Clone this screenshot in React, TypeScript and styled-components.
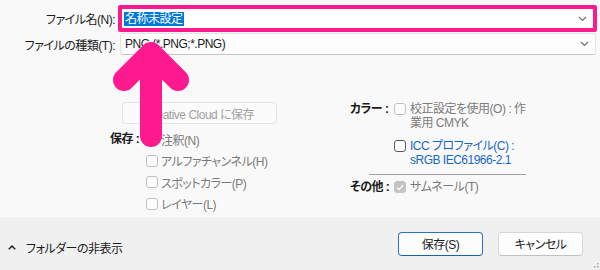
import styled, { createGlobalStyle } from "styled-components";

const GlobalStyle = createGlobalStyle`
  html, body {
    margin: 0;
    padding: 0;
  }
  body {
    background: #f9f9f9;
    font-family: "Liberation Sans", "Noto Sans CJK JP", sans-serif;
  }
`;

const Dialog = styled.div`
  position: relative;
  width: 600px;
  height: 270px;
  overflow: hidden;
  display: flex;
  flex-direction: column;
  font-size: 12px;
  letter-spacing: -0.5px;
  color: #1b1b1b;
  font-feature-settings: "palt";
`;

const Body = styled.div`
  height: 217px;
  box-sizing: border-box;
  padding-top: 5px;
  background: #f9f9f9;
`;

const FieldGrid = styled.div`
  display: grid;
  grid-template-columns: 118px 1fr;
  row-gap: 1px;
  align-items: center;
`;

const FieldLabel = styled.label`
  text-align: right;
  padding-right: 3px;
  white-space: nowrap;
`;

const NameBox = styled.div`
  height: 27px;
  box-sizing: border-box;
  margin-right: 3px;
  padding: 0 6px 0 2px;
  display: flex;
  align-items: center;
  justify-content: space-between;
  background: #fff;
  border: 4px solid #fd1a8e;
  border-radius: 2px;
`;

const Selected = styled.span`
  background: #0078d7;
  color: #fff;
  line-height: 14px;
  padding: 0 1px;
`;

const TypeBox = styled.div`
  height: 22px;
  box-sizing: border-box;
  margin: 0 4px 0 2px;
  padding: 0 6px 0 4px;
  display: flex;
  align-items: center;
  justify-content: space-between;
  background: #fdfdfd;
  border: 1px solid #e4e4e4;
  border-bottom-color: #c6c6c6;
  border-radius: 3px;
`;

const Options = styled.div`
  display: flex;
  padding-top: 47px;
`;

const LeftPanel = styled.div`
  margin-left: 110px;
  width: 240px;
  display: flex;
  flex-direction: column;
`;

const CloudButton = styled.div`
  margin-left: 12px;
  width: 155px;
  height: 22px;
  box-sizing: border-box;
  display: flex;
  align-items: center;
  justify-content: center;
  background: #fbfbfb;
  border: 1px solid #e5e5e5;
  border-radius: 4px;
  color: #a0a0a0;
`;

const SaveGroup = styled.div`
  margin-top: 4.5px;
  display: grid;
  grid-template-columns: 36px 1fr;
  grid-auto-rows: 21.5px;
  align-items: center;
`;

const GroupLabel = styled.span<{ $right?: boolean }>`
  font-weight: 700;
  white-space: nowrap;
  line-height: 14px;
  text-align: ${(p) => (p.$right ? "right" : "left")};
  padding-right: ${(p) => (p.$right ? "6px" : "0")};
  align-self: ${(p) => (p.$right ? "start" : "center")};
`;

const CheckRow = styled.div`
  grid-column: 2;
  display: flex;
  align-items: center;
  gap: 3px;
  color: #7b7b7b;
  white-space: nowrap;
`;

const Box = styled.span<{ $enabled?: boolean; $checked?: boolean }>`
  flex: none;
  width: 12px;
  height: 12px;
  box-sizing: border-box;
  display: flex;
  align-items: center;
  justify-content: center;
  border: 1px solid ${(p) => (p.$checked ? "#c4c4c4" : p.$enabled ? "#5c5c5c" : "#c0c0c0")};
  border-radius: 3px;
  background: ${(p) => (p.$checked ? "#c4c4c4" : "#fdfdfd")};
`;

const RightPanel = styled.div`
  display: flex;
  flex-direction: column;
`;

const Group = styled.div`
  display: grid;
  grid-template-columns: 44px 1fr;
`;

const ItemList = styled.div`
  display: flex;
  flex-direction: column;
  gap: 9px;
`;

const CheckItem = styled.div<{ $link?: boolean }>`
  display: flex;
  align-items: flex-start;
  gap: 4px;
  line-height: 14px;
  color: ${(p) => (p.$link ? "#1668c7" : "#7b7b7b")};
  white-space: nowrap;

  ${Box} {
    margin-top: 1px;
  }
`;

const Separator = styled.div`
  margin: 7px 0 5px 19px;
  width: 157px;
  height: 1px;
  background: #a3a3a3;
`;

const Footer = styled.div`
  height: 53px;
  box-sizing: border-box;
  padding: 0 17px 0 8px;
  display: flex;
  align-items: center;
  background: #f0f0f0;
`;

const FolderToggle = styled.div`
  display: flex;
  align-items: center;
  gap: 10px;
  padding-top: 7px;
  color: #1b1b1b;
`;

const Buttons = styled.div`
  margin-left: auto;
  display: flex;
  gap: 15px;
`;

const Button = styled.button<{ $primary?: boolean }>`
  width: 85px;
  height: 24px;
  padding: 0;
  box-sizing: border-box;
  font: inherit;
  letter-spacing: inherit;
  color: #1b1b1b;
  background: #fdfdfd;
  border: 1px solid ${(p) => (p.$primary ? "#2a72c6" : "#d6d6d6")};
  border-bottom-color: ${(p) => (p.$primary ? "#1c5fae" : "#c2c2c2")};
  border-radius: 4px;
`;

const Arrow = styled.svg`
  position: absolute;
  left: 100px;
  top: 30px;
  pointer-events: none;
`;

const Grip = styled.svg`
  position: absolute;
  right: 1px;
  bottom: 1px;
`;

const Chevron = () => (
  <svg width="9" height="6" viewBox="0 0 9 6">
    <path d="M1 1l3.5 3.5L8 1" fill="none" stroke="#6b6b6b" strokeWidth="1.1" />
  </svg>
);

const App = () => {
  return (
    <Dialog>
      <GlobalStyle />
      <Body>
        <FieldGrid>
          <FieldLabel>ファイル名(N):</FieldLabel>
          <NameBox>
            <Selected>名称未設定</Selected>
            <Chevron />
          </NameBox>
          <FieldLabel>ファイルの種類(T):</FieldLabel>
          <TypeBox>
            <span>PNG (*.PNG;*.PNG)</span>
            <Chevron />
          </TypeBox>
        </FieldGrid>
        <Options>
          <LeftPanel>
            <CloudButton>Creative Cloud に保存</CloudButton>
            <SaveGroup>
              <GroupLabel>保存 :</GroupLabel>
              <CheckRow>
                <Box />
                注釈(N)
              </CheckRow>
              <CheckRow>
                <Box />
                アルファチャンネル(H)
              </CheckRow>
              <CheckRow>
                <Box />
                スポットカラー(P)
              </CheckRow>
              <CheckRow>
                <Box />
                レイヤー(L)
              </CheckRow>
            </SaveGroup>
          </LeftPanel>
          <RightPanel>
            <Group>
              <GroupLabel $right>カラー :</GroupLabel>
              <ItemList>
                <CheckItem>
                  <Box />
                  <span>
                    校正設定を使用(O) : 作<br />
                    業用 CMYK
                  </span>
                </CheckItem>
                <CheckItem $link>
                  <Box $enabled />
                  <span>
                    ICC プロファイル(C) :<br />
                    sRGB IEC61966-2.1
                  </span>
                </CheckItem>
              </ItemList>
            </Group>
            <Separator />
            <Group>
              <GroupLabel $right>その他 :</GroupLabel>
              <CheckItem>
                <Box $checked>
                  <svg width="8" height="7" viewBox="0 0 8 7">
                    <path d="M1 3.6l2 2L7 1.2" fill="none" stroke="#fff" strokeWidth="1.3" />
                  </svg>
                </Box>
                <span>サムネール(T)</span>
              </CheckItem>
            </Group>
          </RightPanel>
        </Options>
      </Body>
      <Footer>
        <FolderToggle>
          <svg width="8" height="5" viewBox="0 0 8 5">
            <path d="M0.8 4.3L4 1.1l3.2 3.2" fill="none" stroke="#1b1b1b" strokeWidth="1.4" />
          </svg>
          フォルダーの非表示
        </FolderToggle>
        <Buttons>
          <Button $primary>保存(S)</Button>
          <Button>キャンセル</Button>
        </Buttons>
      </Footer>
      <Arrow width="110" height="130" viewBox="0 0 110 130">
        <path
          d="M24 50L51 23L78 50M51 23V106"
          fill="none"
          stroke="#fd1a8e"
          strokeWidth="22"
          strokeLinecap="round"
          strokeLinejoin="round"
        />
      </Arrow>
      <Grip width="7" height="7" viewBox="0 0 7 7">
        <rect x="5" y="1" width="1.5" height="1.5" fill="#a6a6a6" />
        <rect x="2" y="4" width="1.5" height="1.5" fill="#a6a6a6" />
        <rect x="5" y="4" width="1.5" height="1.5" fill="#a6a6a6" />
      </Grip>
    </Dialog>
  );
};

export default App;
